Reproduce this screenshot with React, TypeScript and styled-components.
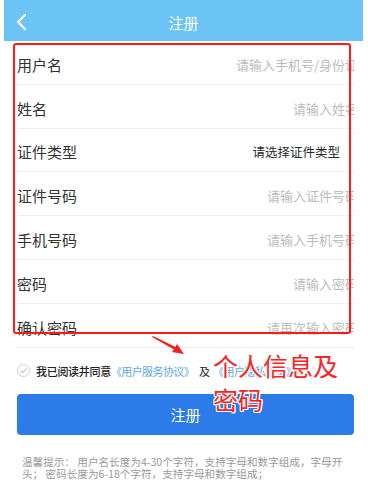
import React from "react";
import styled, { createGlobalStyle } from "styled-components";

const Global = createGlobalStyle`
  html, body { margin: 0; padding: 0; background: #fff; }
  body { font-family: "Noto Sans CJK SC", "Noto Sans", sans-serif; width: 368px; height: 491px; overflow: hidden; }
  * { box-sizing: border-box; }
`;

const Page = styled.div`
  position: relative;
  width: 368px;
  height: 491px;
  background: #fff;
`;

const Header = styled.div`
  height: 41px;
  margin: 0 5px 0 4px;
  background: #6cc3f6;
  display: flex;
  align-items: center;
  justify-content: center;
  position: relative;
`;

const Back = styled.div`
  position: absolute;
  left: 11px;
  top: 13px;
  width: 14px;
  height: 18px;
  display: flex;
`;

const Title = styled.div`
  color: #fff;
  font-size: 15px;
  line-height: 1;
  padding-top: 4px;
`;

const Form = styled.div`
  padding: 0 13px 0 17px;
`;

const Row = styled.div`
  height: 43.8px;
  border-bottom: 1px solid #efefef;
  display: flex;
  align-items: center;
  padding-top: 4px;
`;

const Label = styled.div`
  font-size: 15px;
  color: #333;
  white-space: nowrap;
  width: 90px;
  flex: none;
`;

const ValueBox = styled.div`
  flex: 1;
  overflow: hidden;
  display: flex;
  justify-content: flex-end;
  margin-right: 1px;
`;

const Value = styled.span<{ $dark?: boolean }>`
  font-size: 13px;
  white-space: nowrap;
  flex: none;
  color: ${(p) => (p.$dark ? "#2a2a2a" : "#bcbcbc")};
  margin-right: ${(p) => (p.$dark ? "14px" : "-4px")};
  ${(p) => (p.$dark ? "font-size: 12.5px;" : "")}
`;

const Agree = styled.div`
  display: flex;
  align-items: center;
  padding: 0 0 0 17px;
  height: 46px;
  font-size: 11px;
  white-space: nowrap;
`;

const Check = styled.div`
  width: 13px;
  height: 13px;
  border: 1px solid #cfcfcf;
  border-radius: 50%;
  display: flex;
  align-items: center;
  justify-content: center;
  margin-right: 6px;
`;

const AgreeText = styled.span`
  color: #222;
  font-weight: 500;
  letter-spacing: -0.3px;
`;

const Link = styled.span`
  color: #5ea8e6;
  letter-spacing: -0.6px;
`;

const Sep = styled.span`
  color: #222;
  margin: 0 3px 0 5px;
`;

const Button = styled.div`
  margin: 0 14px 0 17px;
  height: 41px;
  background: #2b7be8;
  border-radius: 4px;
  color: #fff;
  font-size: 15px;
  display: flex;
  align-items: center;
  justify-content: center;
`;

const Tip = styled.div`
  margin: 21px 22px 0 22px;
  font-size: 10.6px;
  line-height: 12.5px;
  color: #9a9a9a;
`;

const Frame = styled.div`
  position: absolute;
  left: 13px;
  top: 43px;
  width: 338px;
  height: 291px;
  border: 2.5px solid #ff1a1a;
  border-radius: 3px;
  pointer-events: none;
`;

const Note = styled.div`
  position: absolute;
  left: 213px;
  top: 348px;
  font-size: 25px;
  line-height: 34px;
  color: #ff2222;
  text-shadow: 1px 0 0 #fff, -1px 0 0 #fff, 0 1px 0 #fff, 0 -1px 0 #fff,
    1px 1px 0 #fff, -1px -1px 0 #fff, 1px -1px 0 #fff, -1px 1px 0 #fff;
`;

const Arrow = styled.svg`
  position: absolute;
  left: 150px;
  top: 334px;
`;

const rows: { label: string; value: string; dark?: boolean }[] = [
  { label: "用户名", value: "请输入手机号/身份证" },
  { label: "姓名", value: "请输入姓名" },
  { label: "证件类型", value: "请选择证件类型", dark: true },
  { label: "证件号码", value: "请输入证件号码" },
  { label: "手机号码", value: "请输入手机号码" },
  { label: "密码", value: "请输入密码" },
  { label: "确认密码", value: "请再次输入密码" },
];

export default function App() {
  return (
    <Page>
      <Global />
      <Header>
        <Back>
          <svg width="14" height="18" viewBox="0 0 14 18">
            <path d="M10 2 L3 9 L10 16" fill="none" stroke="#fff" strokeWidth="2.2" strokeLinecap="round" strokeLinejoin="round" />
          </svg>
        </Back>
        <Title>注册</Title>
      </Header>
      <Form>
        {rows.map((r) => (
          <Row key={r.label}>
            <Label>{r.label}</Label>
            <ValueBox>
              <Value $dark={r.dark}>{r.value}</Value>
            </ValueBox>
          </Row>
        ))}
      </Form>
      <Agree>
        <Check>
          <svg width="9" height="9" viewBox="0 0 9 9">
            <path d="M1.5 4.6 L3.6 6.6 L7.6 2.4" fill="none" stroke="#c8c8c8" strokeWidth="1.1" />
          </svg>
        </Check>
        <AgreeText>我已阅读并同意</AgreeText>
        <Link>《用户服务协议》</Link>
        <Sep>及</Sep>
        <Link>《用户隐私政策》</Link>
      </Agree>
      <Button>注册</Button>
      <Tip>
        温馨提示： 用户名长度为4-30个字符，支持字母和数字组成，字母开头； 密码长度为6-18个字符，支持字母和数字组成；
      </Tip>
      <Frame />
      <Arrow width="40" height="26" viewBox="0 0 40 26">
        <path d="M2 3 L24 15.5 L22 18 L34 20 L27 10 L25.5 13 L3 2 Z" fill="#ff1a1a" />
      </Arrow>
      <Note>
        个人信息及
        <br />
        密码
      </Note>
    </Page>
  );
}
